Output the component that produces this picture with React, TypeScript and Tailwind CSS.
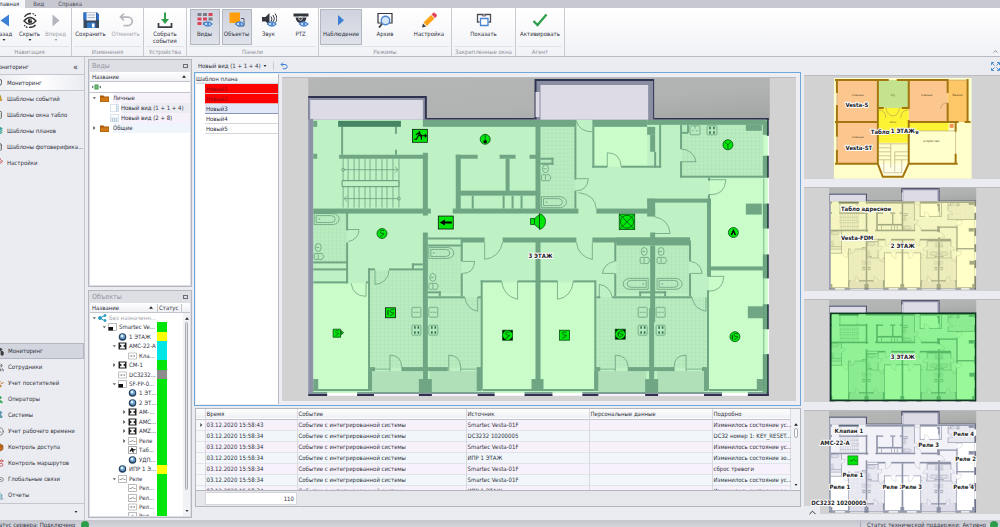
import type { ReactNode } from "react";
import clsx from "clsx";
import {
  Bell,
  Box,
  ChartColumn,
  ChevronUp,
  ClipboardList,
  Clock,
  FileText,
  Layers,
  Link2,
  MonitorSmartphone,
  Pin,
  Route,
  Shield,
  User,
  UserCheck,
  Users,
  Wrench,
} from "lucide-react";

/* ---------- Ribbon icons ---------- */

function Icon({ children }: { children: ReactNode }) {
  return (
    <svg viewBox="0 0 32 32" className="h-4 w-4 shrink-0" fill="none">
      {children}
    </svg>
  );
}

function SmallEye() {
  return (
    <g>
      <path d="M13 24q7-8 17 0q-8 8-17 0z" fill="#fff" stroke="#4a86d0" strokeWidth="2.4" />
      <circle cx="22" cy="24" r="2.6" fill="#4a86d0" />
    </g>
  );
}

const BackIcon = () => (
  <Icon>
    <path d="M26 5v24L9 17z" fill="#3c7fd4" />
  </Icon>
);

const ForwardIcon = () => (
  <Icon>
    <path d="M9 5v24l14-12z" fill="#b4b5bd" />
  </Icon>
);

const HideIcon = () => (
  <Icon>
    <path d="M4 18q12-14 24 0q-12 13-24 0z" stroke="#333" strokeWidth="2.600" />
    <circle cx="16" cy="18" r="4.500" fill="#333" />
    <circle cx="18" cy="16" r="1.500" fill="#fff" />
    <path d="M5 10q4-7 13-7M27 26q-4 5-13 5" stroke="#333" strokeWidth="2.600" />
    <path d="M21 3q5 2 7 6M11 31q-5-2-6-5" stroke="#333" strokeWidth="2.600" strokeDasharray="3 2" />
  </Icon>
);

const SaveIcon = () => (
  <Icon>
    <path d="M1 1h27l4 4v27H1z" fill="#3a4a5e" />
    <path d="M1 1h7v15H1zM27 1h1l4 4v11h-5z" fill="#2f73c9" />
    <path d="M7 1h19v16H7z" fill="#f2f4f8" />
    <path d="M9 6h15M9 11h15" stroke="#a9b7cb" strokeWidth="2" />
    <path d="M8 21h17v11H8z" fill="#3478c8" />
    <path d="M18 23h5v8h-5z" fill="#fff" />
  </Icon>
);

const UndoIcon = () => (
  <Icon>
    <path d="M5 10h15a8 8 0 0 1 0 17h-9M12 3l-7 7 7 7" stroke="#b6b7be" strokeWidth="3.500" />
  </Icon>
);

const CollectIcon = () => (
  <Icon>
    <path d="M3 22v8h26v-8" stroke="#3b3d45" strokeWidth="3.5" />
    <path d="M16 1v18" stroke="#2f9e4c" strokeWidth="4" />
    <path d="M8 14h16l-8 10z" fill="#2f9e4c" />
  </Icon>
);

const ViewsIcon = () => (
  <Icon>
    <path d="M1 2h8v6H1zM12 2h8v6h-8zM12 20h8v6h-8z" fill="#7a7c86" />
    <path d="M23 2h8v6h-8zM1 11h8v6H1z" fill="#d9445b" />
    <path d="M12 11h8v6h-8zM1 20h8v6H1z" fill="#d9445b" />
    <path d="M23 11h8v6h-8z" fill="#7a7c86" />
    <SmallEye />
  </Icon>
);

const ObjectsIcon = () => (
  <Icon>
    <path d="M1 1h21v21H1z" fill="#ff9d0a" />
    <path d="M24 13h6v15H18" stroke="#55606f" strokeWidth="2" />
    <SmallEye />
  </Icon>
);

const SoundIcon = () => (
  <Icon>
    <path d="M2 10h7l8-8v24l-8-7H2z" fill="#34363e" />
    <path d="M20 9q4 5 0 10M24 6q6 8 0 14M28 3q7 10 1 18" stroke="#34363e" strokeWidth="2" />
    <SmallEye />
  </Icon>
);

const PtzIcon = () => (
  <Icon>
    <path d="M1 3h30v6H1zM5 11h22q-2 11-11 11T5 11z" fill="#34363e" />
    <circle cx="15" cy="13" r="3.5" stroke="#fff" strokeWidth="1.5" />
    <SmallEye />
  </Icon>
);

const PlayIcon = () => (
  <Icon>
    <path d="M10 6v21l12-10.500z" fill="#3c7fd4" />
  </Icon>
);

const ArchiveIcon = () => (
  <Icon>
    <path d="M2 3h28v19H2z" stroke="#34363e" strokeWidth="2.4" />
    <circle cx="17" cy="17" r="8.500" fill="#d5e4f6" stroke="#4a86d0" strokeWidth="2.8" />
    <path d="M10 24l-6 7" stroke="#34363e" strokeWidth="3.5" />
  </Icon>
);

const PencilIcon = () => (
  <Icon>
    <path d="M2 31l2-8 6 6z" fill="#34363e" />
    <path d="M5 21L20 6l7 7-15 15z" fill="#ffa416" />
    <path d="M21 5l3-3q2-2 4 0l3 3q2 2 0 4l-3 3z" fill="#e0455a" />
  </Icon>
);

const WindowsIcon = () => (
  <Icon>
    <path d="M7 20H3V5h11v4M25 20h4V5H18v4" stroke="#4b4e57" strokeWidth="2.600" />
    <path d="M9 13h15v14H9z" fill="#fff" stroke="#4a86d0" strokeWidth="2.600" />
  </Icon>
);

const CheckIcon = () => (
  <Icon>
    <path d="M3 18l8 8L29 5" stroke="#2f9e4c" strokeWidth="4.500" />
  </Icon>
);

/* ---------- Ribbon ---------- */

type RibbonButtonProps = {
  icon: ReactNode;
  label: string;
  width?: string;
  active?: boolean;
  disabled?: boolean;
  caret?: boolean;
};

function RibbonButton({ icon, label, width = "w-[42px]", active, disabled, caret }: RibbonButtonProps) {
  return (
    <button
      className={clsx(
        "flex h-9 shrink-0 flex-col items-center border pt-0.5",
        width,
        active ? "border-[#b3b7c2] bg-linear-to-b from-[#cfd3de] to-[#dfe2e9]" : "border-transparent",
        disabled && "text-[#a3a4ac]"
      )}
    >
      {icon}
      <span className="mt-0.5 text-center leading-[7px]">{label}</span>
      {caret && <Caret className="mt-0.5" />}
    </button>
  );
}

function Caret({ className }: { className?: string }) {
  return (
    <svg viewBox="0 0 6 4" className={clsx("h-[2px] w-[4px] shrink-0", className)}>
      <path d="M0 0h6L3 4z" fill="currentColor" />
    </svg>
  );
}

function RibbonGroup({ title, className, children }: { title: string; className: string; children: ReactNode }) {
  return (
    <section className={clsx("flex shrink-0 flex-col border-r border-[#c9cad2] pt-px", className)}>
      <div className="flex flex-1 justify-center gap-0.5">{children}</div>
      <h2 className="mx-0.5 border-t border-[#e3e4ea] text-center leading-[9px] whitespace-nowrap text-[#8f919b]">
        {title}
      </h2>
    </section>
  );
}

function Ribbon() {
  return (
    <header className="shrink-0">
      <nav className="flex h-2 items-center bg-[#c8c8d1] leading-[8px]">
        <button className="-ml-2 h-2 bg-[#f6f7fa] pr-1.5 pl-1">Главная</button>
        <button className="ml-2 text-[#4b4d5c]">Вид</button>
        <button className="ml-3.5 text-[#4b4d5c]">Справка</button>
      </nav>
      <div className="flex h-[49px] overflow-hidden border-b border-[#b9bac3] bg-linear-to-b from-white to-[#f1f2f6]">
        <RibbonGroup title="Навигация" className="-ml-3 w-[84px]">
          <RibbonButton icon={<BackIcon />} label="Назад" width="w-[24px]" caret />
          <RibbonButton icon={<HideIcon />} label="Скрыть" width="w-[24px]" caret />
          <RibbonButton icon={<ForwardIcon />} label="Вперед" width="w-[24px]" caret disabled />
        </RibbonGroup>
        <RibbonGroup title="Изменения" className="w-[72px]">
          <RibbonButton icon={<SaveIcon />} label="Сохранить" width="w-[34px]" />
          <RibbonButton icon={<UndoIcon />} label="Отменить" width="w-[32px]" disabled />
        </RibbonGroup>
        <RibbonGroup title="Устройства" className="w-[43px]">
          <RibbonButton icon={<CollectIcon />} label="Собрать события" width="w-[32px]" />
        </RibbonGroup>
        <RibbonGroup title="Панели" className="w-[132px]">
          <RibbonButton icon={<ViewsIcon />} label="Виды" width="w-[30px]" active />
          <RibbonButton icon={<ObjectsIcon />} label="Объекты" width="w-[30px]" active />
          <RibbonButton icon={<SoundIcon />} label="Звук" width="w-[30px]" />
          <RibbonButton icon={<PtzIcon />} label="PTZ" width="w-[30px]" />
        </RibbonGroup>
        <RibbonGroup title="Режимы" className="w-[133px]">
          <RibbonButton icon={<PlayIcon />} label="Наблюдение" active />
          <RibbonButton icon={<ArchiveIcon />} label="Архив" />
          <RibbonButton icon={<PencilIcon />} label="Настройка" />
        </RibbonGroup>
        <RibbonGroup title="Закрепленные окна" className="w-[64px]">
          <RibbonButton icon={<WindowsIcon />} label="Показать" />
        </RibbonGroup>
        <RibbonGroup title="Агент" className="w-[49px]">
          <RibbonButton icon={<CheckIcon />} label="Активировать" />
        </RibbonGroup>
        <button className="mt-auto mr-px mb-px ml-auto text-[#4b4d5c]" aria-label="Свернуть ленту">
          <ChevronUp size={7} />
        </button>
      </div>
    </header>
  );
}

/* ---------- Left navigation ---------- */

const pages = [
  { label: "Мониторинг", icon: <Shield size={9} color="#333" />, active: true },
  { label: "Шаблоны событий", icon: <Bell size={9} color="#a37b1c" fill="#e0a92c" /> },
  { label: "Шаблоны окна табло", icon: <ClipboardList size={9} color="#4e5a45" /> },
  { label: "Шаблоны планов", icon: <Layers size={9} color="#2f9e6c" fill="#35a9c9" /> },
  { label: "Шаблоны фотоверифика...", icon: <FileText size={9} color="#555" /> },
  { label: "Настройки", icon: <Wrench size={9} color="#c23a3a" /> },
];

const modules = [
  { label: "Мониторинг", icon: <MonitorSmartphone size={9} color="#333" fill="#444" />, active: true },
  { label: "Сотрудники", icon: <Users size={9} color="#2d4f7c" fill="#e0a92c" /> },
  { label: "Учет посетителей", icon: <UserCheck size={9} color="#b26a24" fill="#d8903c" /> },
  { label: "Операторы", icon: <User size={9} color="#2f9e4c" fill="#48b35c" /> },
  { label: "Системы", icon: <Pin size={9} color="#2f73c9" fill="#6bb36f" /> },
  { label: "Учет рабочего времени", icon: <Clock size={9} color="#666" /> },
  { label: "Контроль доступа", icon: <Box size={9} color="#8a4510" fill="#c9701c" /> },
  { label: "Контроль маршрутов", icon: <Route size={9} color="#c23a3a" /> },
  { label: "Глобальные связи", icon: <Link2 size={9} color="#666" /> },
  { label: "Отчеты", icon: <ChartColumn size={9} color="#2f7fa0" /> },
];

function Sidebar() {
  return (
    <aside className="flex w-[84px] shrink-0 flex-col overflow-hidden">
      <div className="-ml-1.5 flex h-[18px] shrink-0 items-center justify-between border-b border-[#c5c6ce] pt-0.5 pr-1.5">
        <h2>Мониторинг</h2>
        <button className="text-[9px]" aria-label="Свернуть">
          «
        </button>
      </div>
      <ul className="-ml-1.5 flex-1">
        {pages.map((p) => (
          <li key={p.label}>
            <button
              className={clsx(
                "flex h-4 w-full items-center gap-1 border-b text-left whitespace-nowrap",
                p.active
                  ? "border-[#c5c6ce] bg-linear-to-r from-[#ebecf1] via-white to-[#ebecf1]"
                  : "border-transparent"
              )}
            >
              {p.icon}
              {p.label}
            </button>
          </li>
        ))}
      </ul>
      <ul className="-ml-1.5">
        {modules.map((m) => (
          <li key={m.label}>
            <button
              className={clsx(
                "flex h-4 w-full items-center gap-1 border pr-px text-left whitespace-nowrap",
                m.active ? "border-[#b3b6c0] bg-[#d3d6df]" : "border-transparent"
              )}
            >
              {m.icon}
              {m.label}
            </button>
          </li>
        ))}
      </ul>
      <div className="flex h-[17px] shrink-0 items-center justify-end border-t border-[#c5c6ce] pr-1.5">
        <Caret />
      </div>
    </aside>
  );
}

/* ---------- Docked panels ---------- */

function Panel({ title, children }: { title: string; children: ReactNode }) {
  return (
    <section className="flex min-h-0 flex-1 basis-0 flex-col border border-[#b5b7c0] bg-[#dedfe5] px-px pb-px">
      <div className="flex h-3 shrink-0 items-center justify-between px-0.5">
        <h2 className="text-[7px] text-[#9294a0]">{title}</h2>
        <span className="h-[4px] w-[5px] border border-[#6b6d78]" />
      </div>
      {children}
    </section>
  );
}

function SortMark() {
  return (
    <svg viewBox="0 0 6 4" className="h-[3px] w-[4px] shrink-0">
      <path d="M0 4h6L3 0z" fill="#222" />
    </svg>
  );
}

function Arrow({ open }: { open?: boolean }) {
  return (
    <svg viewBox="0 0 6 6" className="h-[4px] w-[4px] shrink-0">
      {open === true && <path d="M1 2h5L3.500 5z" fill="#666" />}
      {open === false && <path d="M2 0v6l3-3z" fill="#444" />}
    </svg>
  );
}

function Folder() {
  return (
    <svg viewBox="0 0 18 14" className="h-[7px] w-[9px] shrink-0">
      <path d="M0 1h7l2 2h9v11H0z" fill="#a8560b" />
      <path d="M1 5h16v8H1z" fill="#d07a17" />
    </svg>
  );
}

function ViewIcon({ bottom }: { bottom?: boolean }) {
  return (
    <svg viewBox="0 0 18 16" className="h-[8px] w-[9px] shrink-0">
      <path d="M.5.5h17v15H.5z" fill="#fff" stroke="#9fb9cf" />
      {bottom ? (
        <path d="M1 8h16M1 12h16M5 8v8M9 8v8M13 8v8" stroke="#8fb0cb" />
      ) : (
        <path d="M13 1v14M13 5h4M13 9h4M13 12h4" stroke="#8fb0cb" />
      )}
    </svg>
  );
}

function ViewsPanel() {
  return (
    <Panel title="Виды">
      <div className="flex min-h-0 flex-1 flex-col bg-white">
        <div className="flex h-2.5 shrink-0 items-center justify-between border-b border-[#c3c5cd] bg-linear-to-b from-white to-[#eff0f4] px-0.5 pr-1">
          Название
          <SortMark />
        </div>
        <div className="flex h-[11px] shrink-0 items-center border-b border-[#c3c5cd] pl-0.5">
          <svg viewBox="0 0 18 12" className="h-[6px] w-[9px]">
            <path d="M5 1h8v10H5z" fill="#3d9a48" />
            <path d="M0 3v6l4-3zM14 6l4-3v6z" fill="#6b7c70" />
            <path d="M7 4h4M7 6h4M7 8h4" stroke="#cfe8d2" />
          </svg>
        </div>
        <ul>
          <li className="flex h-2.5 items-center gap-1 pl-0.5">
            <Arrow open />
            <Folder />
            <span className="flex-1 bg-[#f6f1fa] leading-[10px]">Личные</span>
          </li>
          <li className="flex h-2.5 items-center gap-0.5 pl-5">
            <ViewIcon />
            <span className="flex-1 bg-[#ecedf2] leading-[10px] whitespace-nowrap">Новый вид (1 + 1 + 4)</span>
          </li>
          <li className="flex h-2.5 items-center gap-0.5 pl-5">
            <ViewIcon bottom />
            <span className="flex-1 bg-[#f6f1fa] leading-[10px] whitespace-nowrap">Новый вид (2 + 8)</span>
          </li>
          <li className="flex h-2.5 items-center gap-1 pl-0.5">
            <Arrow open={false} />
            <Folder />
            <span className="flex-1 bg-[#eff5fa] leading-[10px]">Общие</span>
          </li>
        </ul>
      </div>
    </Panel>
  );
}

type NodeKind = "share" | "panel" | "globe" | "sum" | "relay" | "run" | "chip";

function NodeIcon({ kind }: { kind: NodeKind }) {
  return (
    <svg viewBox="0 0 18 16" className="h-[8px] w-[9px] shrink-0" fill="none">
      {kind === "share" && (
        <g stroke="#2a9cc4" fill="#2a9cc4" strokeWidth="2">
          <path d="M4 8l10-5M4 8l10 6" />
          <circle cx="4" cy="8" r="3" />
          <circle cx="14" cy="3" r="2" />
          <circle cx="14" cy="13" r="2" />
        </g>
      )}
      {kind === "panel" && (
        <g>
          <path d="M1 1h16v14H1z" fill="#fff" stroke="#777" />
          <path d="M1 8h9v7H1z" fill="#111" />
        </g>
      )}
      {kind === "globe" && (
        <g>
          <circle cx="9" cy="8" r="7.500" fill="#27435f" />
          <circle cx="9" cy="7" r="5" fill="#6ea6d6" />
          <circle cx="8" cy="6" r="2.500" fill="#e7f3fc" />
        </g>
      )}
      {kind === "sum" && (
        <g>
          <path d="M1 1h16v14H1z" fill="#222" />
          <path d="M4 3h10v2l-4 3 4 3v2H4v-2l4-3-4-3z" fill="#fff" />
        </g>
      )}
      {kind === "relay" && (
        <g stroke="#777">
          <path d="M1 1h16v14H1z" fill="#fff" />
          <path d="M3 9h3l5-3M11 9h4" stroke="#333" />
        </g>
      )}
      {kind === "run" && (
        <g>
          <path d="M1 1h16v14H1z" fill="#fff" stroke="#555" />
          <path d="M4 11l4-6 3 3 4-1M7 7l4 6" stroke="#111" strokeWidth="2.500" />
        </g>
      )}
      {kind === "chip" && (
        <g stroke="#888">
          <path d="M1 2h16v12H1z" fill="#fff" />
          <path d="M3 8h3M7 6v4M9 8h3M13 6v4" stroke="#555" />
        </g>
      )}
    </svg>
  );
}

type ObjectNode = { level: 0 | 1 | 2 | 3; kind: NodeKind; label: string; open?: boolean; status?: string };

const objects: ObjectNode[] = [
  { level: 0, kind: "share", label: "Без назначенн...", open: true },
  { level: 1, kind: "panel", label: "Smartec Ve...", open: true, status: "bg-[#00e60a]" },
  { level: 2, kind: "globe", label: "1 ЭТАЖ", status: "bg-[#ffff00]" },
  { level: 2, kind: "sum", label: "АМС-22-А", open: true, status: "bg-[#00e5e5]" },
  { level: 3, kind: "chip", label: "Кла...", status: "bg-[#00e5e5]" },
  { level: 2, kind: "sum", label: "СМ-1", open: false, status: "bg-[#00e60a]" },
  { level: 2, kind: "chip", label: "DC3232...", status: "bg-[#8c8c8c]" },
  { level: 2, kind: "panel", label: "SF-FP-0...", open: true, status: "bg-[#00e60a]" },
  { level: 3, kind: "globe", label: "1 ЭТ...", status: "bg-[#00e60a]" },
  { level: 3, kind: "globe", label: "2 ЭТ...", status: "bg-[#00e60a]" },
  { level: 3, kind: "sum", label: "АМ-...", open: false, status: "bg-[#00e60a]" },
  { level: 3, kind: "sum", label: "АМС...", open: false, status: "bg-[#00e60a]" },
  { level: 3, kind: "sum", label: "AMZ...", open: false, status: "bg-[#00e60a]" },
  { level: 3, kind: "relay", label: "Реле", open: false, status: "bg-[#00e60a]" },
  { level: 3, kind: "run", label: "Таб...", status: "bg-[#00e60a]" },
  { level: 3, kind: "globe", label: "УДП...", status: "bg-[#00e60a]" },
  { level: 2, kind: "globe", label: "ИПР 1 Э...", status: "bg-[#ffff00]" },
  { level: 2, kind: "relay", label: "Реле", open: true, status: "bg-[#00e60a]" },
  { level: 3, kind: "relay", label: "Рел...", status: "bg-[#00e60a]" },
  { level: 3, kind: "relay", label: "Рел...", status: "bg-[#00e60a]" },
  { level: 3, kind: "chip", label: "Рел...", status: "bg-[#00e60a]" },
];

const indent = ["pl-0.5", "pl-3", "pl-[22px]", "pl-8"];

function ObjectsPanel() {
  return (
    <Panel title="Объекты">
      <div className="flex h-2.5 shrink-0 items-center border-b border-[#c3c5cd] bg-linear-to-b from-white to-[#eff0f4]">
        <span className="flex w-[67px] items-center justify-between pr-1 pl-0.5">
          Название
          <SortMark />
        </span>
        <span className="w-[25px] border-x border-[#c3c5cd] pl-px">Статус</span>
      </div>
      <div className="flex min-h-0 flex-1 bg-white">
        <ul className="flex flex-1 flex-col overflow-hidden">
          {objects.map((o, i) => (
            <li key={i} className="flex min-h-0 flex-1 basis-0">
              <span
                className={clsx(
                  "flex w-[67px] shrink-0 items-center gap-0.5 whitespace-nowrap",
                  indent[o.level],
                  o.level === 0 && "text-[#a3a4ac]"
                )}
              >
                <Arrow open={o.open} />
                <NodeIcon kind={o.kind} />
                <span>{o.label}</span>
              </span>
              <span className={clsx("w-2.5", o.status)} />
            </li>
          ))}
          <li className="flex h-1 shrink-0 overflow-hidden">
            <span className="flex w-[67px] gap-0.5 pl-[38px]">
              <NodeIcon kind="relay" />
              <span>Рел...</span>
            </span>
            <span className="w-2.5 bg-[#00e60a]" />
          </li>
        </ul>
        <div className="flex w-[7px] flex-col items-center justify-between bg-[#f1f2f5] py-1">
          <SortMark />
          <span className="mt-0.5 mb-5 w-[3px] flex-1 rounded-full border border-[#a9abb5] bg-[#dfe0e6]" />
          <Caret />
        </div>
      </div>
    </Panel>
  );
}

/* ---------- Floor plan ---------- */

// [x, y, width, height] in plan units
type Rect = [number, number, number, number];

const rooms: Rect[] = [
  [313, 283, 55, 107],
  [483, 282, 53, 108],
  [541, 282, 54, 108],
  [595, 126, 53, 40],
  [711, 178, 54, 89],
  [710, 270, 55, 120],
  [765, 135, 5, 20],
  [765, 177, 5, 26],
  [765, 228, 5, 26],
  [765, 278, 5, 26],
  [765, 329, 5, 25],
];

const tiles: Rect[] = [
  [313, 212, 34, 50],
  [370, 270, 53, 98],
  [541, 126, 35, 82],
  [683, 124, 81, 52],
  [428, 245, 34, 48],
  [617, 245, 34, 48],
  [656, 245, 34, 48],
  [430, 297, 51, 71],
  [597, 297, 54, 71],
  [656, 297, 52, 71],
];

const balconies: Rect[] = [
  [372, 371, 50, 21],
  [430, 371, 48, 21],
  [599, 371, 48, 21],
  [658, 371, 47, 21],
];

const walls: Rect[] = [
  [308, 118, 5, 276],
  [308, 392, 462, 2],
  [313, 120, 4, 6],
  [313, 153, 4, 5],
  [341, 126, 2, 28],
  [395, 126, 2, 7],
  [395, 149, 2, 5],
  [339, 154, 89, 4],
  [423, 152, 5, 63],
  [423, 119, 154, 7],
  [593, 119, 55, 7],
  [648, 119, 119, 5],
  [313, 208, 118, 5],
  [423, 232, 5, 162],
  [346, 212, 2, 18],
  [346, 242, 2, 41],
  [313, 261, 34, 2],
  [313, 268, 34, 2],
  [313, 281, 35, 2],
  [368, 268, 7, 2],
  [389, 268, 35, 2],
  [412, 263, 11, 2],
  [412, 263, 2, 6],
  [368, 268, 2, 122],
  [366, 281, 3, 2],
  [370, 367, 5, 4],
  [402, 367, 46, 4],
  [368, 371, 4, 20],
  [419, 379, 13, 16],
  [313, 379, 5, 12],
  [313, 389, 55, 2],
  [456, 154, 22, 4],
  [456, 154, 5, 56],
  [500, 154, 16, 4],
  [506, 158, 4, 33],
  [530, 154, 7, 4],
  [536, 120, 5, 90],
  [460, 190, 77, 5],
  [472, 195, 2, 13],
  [503, 195, 2, 13],
  [512, 195, 2, 13],
  [521, 195, 2, 13],
  [453, 208, 126, 5],
  [597, 208, 59, 5],
  [575, 126, 2, 53],
  [575, 190, 2, 18],
  [541, 157, 13, 2],
  [541, 162, 13, 2],
  [552, 157, 2, 7],
  [593, 126, 2, 41],
  [593, 165, 15, 2],
  [622, 165, 40, 2],
  [648, 126, 8, 8],
  [651, 134, 5, 17],
  [655, 151, 2, 16],
  [660, 124, 2, 43],
  [681, 124, 2, 24],
  [681, 161, 2, 16],
  [681, 175, 86, 2],
  [688, 124, 2, 8],
  [683, 131, 6, 2],
  [747, 124, 16, 6],
  [764, 120, 4, 14],
  [764, 155, 4, 22],
  [648, 198, 62, 4],
  [648, 198, 8, 18],
  [651, 232, 5, 6],
  [708, 198, 4, 78],
  [709, 177, 2, 3],
  [709, 194, 2, 5],
  [747, 203, 16, 11],
  [428, 237, 34, 2],
  [428, 244, 34, 2],
  [461, 237, 24, 5],
  [503, 237, 74, 5],
  [593, 237, 98, 5],
  [617, 237, 74, 8],
  [461, 240, 2, 21],
  [461, 273, 2, 23],
  [536, 241, 5, 150],
  [428, 291, 13, 2],
  [439, 291, 2, 5],
  [428, 296, 37, 2],
  [478, 296, 4, 2],
  [481, 280, 21, 2],
  [518, 280, 40, 2],
  [574, 280, 22, 2],
  [481, 280, 2, 110],
  [595, 280, 2, 110],
  [615, 240, 2, 21],
  [615, 273, 2, 23],
  [690, 240, 2, 21],
  [690, 273, 2, 23],
  [597, 296, 4, 2],
  [613, 296, 80, 2],
  [640, 291, 27, 2],
  [640, 291, 2, 5],
  [665, 291, 2, 5],
  [651, 245, 5, 77],
  [650, 308, 5, 80],
  [708, 266, 57, 4],
  [708, 290, 2, 100],
  [749, 306, 16, 12],
  [477, 367, 5, 24],
  [596, 367, 5, 4],
  [595, 371, 4, 20],
  [629, 367, 46, 4],
  [703, 367, 6, 4],
  [705, 371, 4, 20],
  [532, 379, 12, 12],
  [646, 379, 13, 14],
  [758, 379, 7, 12],
  [483, 389, 53, 2],
  [541, 389, 54, 2],
  [710, 389, 55, 2],
  [764, 203, 4, 25],
  [764, 254, 4, 24],
  [764, 304, 4, 25],
  [764, 354, 4, 40],
];

const facade: Rect[] = [
  [308, 394, 19, 2],
  [357, 394, 17, 2],
  [419, 394, 13, 2],
  [478, 394, 17, 2],
  [525, 394, 28, 2],
  [583, 394, 16, 2],
  [646, 394, 13, 2],
  [705, 394, 18, 2],
  [749, 394, 21, 2],
  [768, 118, 2, 17],
  [768, 155, 2, 22],
  [768, 203, 2, 25],
  [768, 254, 2, 24],
  [768, 304, 2, 25],
  [768, 354, 2, 42],
];

const doors = [
  "M348 229h11a12 12 0 0 1-11 12",
  "M351 283q2 13 15 13v-13",
  "M375 270v14a14 14 0 0 0 14-14",
  "M390 371v-16q11 0 12 12v4",
  "M485 242v17q15-2 18-17",
  "M577 242q2 14 16 17v-17",
  "M463 261h12q-1 12-12 12",
  "M465 297q2 12 13 14v-14",
  "M502 281q2 15 16 18v-18",
  "M558 281v18q14-2 16-18",
  "M577 120q3 11 16 11",
  "M577 178h12q-1 12-12 12",
  "M579 192q17 2 18 16",
  "M608 166v-14q13 0 14 14",
  "M681 148q14 1 16 13h-16",
  "M710 179h17q-1 16-17 15",
  "M655 216q15 3 16 17h-16",
  "M709 276h16q-1 15-16 15",
  "M615 261q-10 2-12 12h12",
  "M600 297v-13q11 2 13 13",
  "M692 261q10 2 11 12h-11",
  "M693 297q2 12 14 14v-14",
  "M449 371v-16q11 0 12 12v4",
  "M616 371v-16q12 0 13 12v4",
  "M687 371v-16q-12 0-12 12v4",
];

function Rects({ items, fill }: { items: Rect[]; fill: string }) {
  return (
    <g fill={fill}>
      {items.map(([x, y, w, h], i) => (
        <rect key={i} x={x} y={y} width={w} height={h} />
      ))}
    </g>
  );
}

function Tub({ x, y, flip }: { x: number; y: number; flip?: boolean }) {
  return (
    <g transform={flip ? `translate(${x + 25} ${y}) scale(-1 1)` : `translate(${x} ${y})`}>
      <path d="M0 0h19q6 1 6 5.500t-6 5.500H0z" />
      <path d="M2 2h15q4 0 4 3.500T17 9H2z" />
      <circle cx="5" cy="5.500" r=".4" />
    </g>
  );
}

function Kitchen({ x, y }: { x: number; y: number }) {
  return (
    <g transform={`translate(${x} ${y})`}>
      <rect width="9" height="10" rx="1" />
      <path d="M1.500 5h2M5.500 5h2M4.500 4.500v1" />
      <rect y="18" width="9" height="10" rx="1" />
      <path d="M3 19v8M6.500 19v8" stroke="#3f4f63" strokeWidth="1.600" strokeDasharray="2.500 2.500" />
    </g>
  );
}

function Toilet({ x, y }: { x: number; y: number }) {
  return (
    <g transform={`translate(${x} ${y})`}>
      <ellipse cx="4" cy="4" rx="3" ry="4" />
      <path d="M2 4h3" />
      <rect x="0" y="10" width="4" height="6" rx="1" />
      <path d="M4 10h4q3 3 0 6H4" />
    </g>
  );
}

type FloorPlanProps = { tint?: string; tintOpacity?: number; outlined?: boolean; children?: ReactNode };

function FloorPlan({ tint, tintOpacity, outlined, children }: FloorPlanProps) {
  return (
    <>
      <defs>
        <pattern id="tile" width="4" height="4" patternUnits="userSpaceOnUse">
          <rect width="4" height="4" fill="#ebebf3" />
          <path d="M0 .5h4M.5 0v4" stroke="#dfdfe9" strokeWidth=".6" />
        </pattern>
        <linearGradient id="sky" x1="0" x2="1" y2="1">
          <stop offset="0" stopColor="#b5b7b6" />
          <stop offset=".6" stopColor="#b1b3b2" />
          <stop offset="1" stopColor="#a3a5a4" />
        </linearGradient>
      </defs>
      <rect x="308" y="77" width="463" height="320" fill="#d2d2d2" />
      <rect x="308" y="77" width="463" height="42" fill="url(#sky)" />

      {/* Roof terraces */}
      <path d="M308 95h119v24H308z" fill="#2f3350" />
      <path d="M308 97h117v22H308z" fill="#8e93a8" />
      <path d="M310 99h113v20H310z" fill="#dcdbe6" />
      <path d="M535 78h120v41H535z" fill="#2f3350" />
      <path d="M537 80h117v39H537z" fill="#8a8ea3" />
      <path d="M541 84h108v35H541zM536 91h4v25h-4z" fill="#dcdbe6" />
      <path d="M427 118h108M655 118h115" stroke="#2f3350" strokeWidth="2" />

      <rect x="308" y="119" width="462" height="277" fill="#f2f2f8" />
      <Rects items={rooms} fill="#ffffff" />
      <Rects items={tiles} fill="url(#tile)" />
      <Rects items={balconies} fill="#dfdce9" />
      <Rects items={walls} fill="#8e93a8" />
      <rect x="338" y="120" width="63" height="6" fill="#5b6a80" />
      <path d="M327 392h30v3h-30zM495 392h30v3h-30zM553 392h30v3h-30zM723 392h26v3h-26z" fill="#fff" />
      <Rects items={facade} fill="#2f3350" />

      <g fill="none" stroke="#777f94" strokeWidth=".7">
        {doors.map((d) => (
          <path key={d} d={d} />
        ))}
        <path d="M343 158v49M348 158v49M354 158v49M359 158v49M365 158v49M370 158v49M376 158v49M382 158v49M387 158v49M393 158v49M399 158v49" />
        <path d="M342 180h57v6h-57z" fill="#f2f2f8" strokeWidth="1" />
        <path d="M344 169h54l-3-3m3 3l-3 3M398 198h-54l3-3m-3 3l3 3" />
        <circle cx="343" cy="169" r="1.500" />
        <circle cx="399" cy="198" r="1.500" />
        <path d="M375 369h15M461 369h16M601 369h15M687 369h16M765 178v88M765 271v118" />
        <Tub x={314} y={213} />
        <Tub x={429} y={247} />
        <Tub x={542} y={196} />
        <Tub x={624} y={278} flip />
        <Tub x={658} y={278} />
        <Toilet x={314} y={243} />
        <Toilet x={429} y={273} />
        <Toilet x={542} y={164} />
        <Toilet x={641} y={247} />
        <Toilet x={658} y={247} />
        <Kitchen x={412} y={307} />
        <Kitchen x={429} y={307} />
        <Kitchen x={639} y={307} />
        <Kitchen x={657} y={307} />
        <rect x="691" y="125" width="10" height="9" rx="1" />
        <path d="M696 125v3M693 130h2M697 130h2" />
        <rect x="708" y="125" width="10" height="9" rx="1" />
        <path d="M711 126v7M715 126v7" stroke="#3f4f63" strokeWidth="1.600" strokeDasharray="2.500 2" />
      </g>

      {tint && (
        <rect
          x="313"
          y="119"
          width="456"
          height="274"
          fill={tint}
          fillOpacity={tintOpacity}
          stroke={outlined ? "#103a20" : "none"}
          strokeWidth={outlined ? 5 : 0}
        />
      )}
      {children}
    </>
  );
}

function Label({ x, y, anchor = "middle", children }: { x: number; y: number; anchor?: "start" | "middle"; children: string }) {
  return (
    <text
      x={x}
      y={y}
      textAnchor={anchor}
      dominantBaseline="central"
      className="fill-[#1b1b25] stroke-white text-[6px] font-bold"
      strokeWidth="2"
      strokeLinejoin="round"
      paintOrder="stroke"
    >
      {children}
    </text>
  );
}

const squiggle = "M2-3q-4-1-4 1t3 2-3 3";

function Devices() {
  return (
    <g stroke="#064d10" strokeWidth=".8" fill="#00e60a">
      {/* Exit signs */}
      <rect x="412.500" y="128.500" width="15" height="13" stroke="#0b1a0c" />
      <circle cx="419.500" cy="131.500" r="1" fill="#000" stroke="none" />
      <path d="M414.500 138.500h2l2.500-4.500 2.500 2v3M416 134l2-1.500 2 .5 2 2h2M422.500 135h4M425 133.500l1.500 1.500-1.500 1.500" fill="none" stroke="#000" strokeWidth="1.100" />
      <rect x="438.500" y="215.500" width="15" height="13" stroke="#0b1a0c" />
      <path d="M440 222l5-3v2h7v2h-7v2z" fill="#000" stroke="none" />

      <circle cx="485.500" cy="138.500" r="5" />
      <circle cx="485.500" cy="141" r="1.800" fill="#000" stroke="none" />
      <path d="M485.500 134v6" />
      <path d="M531 218h4l5-4v14l-5-4h-4zM540 213q6 2 6 8t-6 8zM535 218v6" />
      <rect x="620" y="213.500" width="15.500" height="15.500" />
      <circle cx="627.800" cy="221.200" r="6.500" />
      <path d="M620 213.500l15.500 15.500M635.500 213.500L620 229" />
      <circle cx="729" cy="144" r="5" />
      <path d="M726 141l3 3 3-3M729 144v4" fill="none" />
      <circle cx="734.500" cy="232" r="5" />
      <path d="M732.500 234.500l2-4.500 2 4.500" fill="none" stroke="#000" strokeWidth="1.500" />

      {/* Smoke detectors */}
      <circle cx="382" cy="233" r="5" />
      <path d={squiggle} transform="translate(382 233)" fill="none" />
      <rect x="385.500" y="307.500" width="10" height="10" stroke="#0b1a0c" />
      <path d={squiggle} transform="translate(392 312.500)" fill="none" />
      <path d="M388 310v5" strokeWidth="1.200" />
      <path d="M333 329h7.500v8H333zM341 330.500l2.500 2-2.500 2z" />
      <path d={squiggle} transform="translate(337 333) scale(.8)" fill="none" />
      <rect x="503" y="330" width="10" height="10" fill="#000" />
      <circle cx="508" cy="335" r="4.800" stroke="none" />
      <path d={squiggle} transform="translate(508 335)" fill="none" />
      <rect x="560" y="330" width="10" height="10" />
      <path d={squiggle} transform="translate(565 335)" fill="none" />
      <rect x="616" y="329" width="10" height="10" fill="#000" />
      <circle cx="621" cy="334" r="4.800" stroke="none" />
      <path d={squiggle} transform="translate(622 334)" fill="none" />
      <path d="M619 332v4" strokeWidth="1.200" />
      <circle cx="736" cy="336.500" r="5" />
      <path d={squiggle} transform="translate(737 336.500)" fill="none" />
      <path d="M733.500 335v4" strokeWidth="1.200" />
    </g>
  );
}

/* ---------- Main view ---------- */

const templates = [
  { label: "Новый1", row: "bg-[#ff0000] text-[#8b1010] border-[#e9b0b0]" },
  { label: "Новый2", row: "bg-[#ff0000] text-[#8b1010] border-[#e9b0b0]" },
  { label: "Новый3", row: "bg-[#e2e8f8] border-[#8a95b5]" },
  { label: "Новый4", row: "border-[#d5d6dd]" },
  { label: "Новый5", row: "border-[#d5d6dd]" },
];

function PlanView() {
  return (
    <section className="flex min-h-0 flex-1 border border-[#6ea8d8] bg-[#eceef3] p-px">
      <div className="w-[83px] shrink-0 border-r border-[#b9bbc4] bg-white">
        <div className="h-2.5 border-b border-[#d5d6dd] bg-linear-to-b from-white to-[#eff0f4] leading-[9px]">
          Шаблон плана
        </div>
        <ul className="pl-[9px]">
          {templates.map((t) => (
            <li key={t.label} className={clsx("h-2.5 border-b pl-px leading-[10px]", t.row)}>
              {t.label}
            </li>
          ))}
        </ul>
      </div>
      <div className="min-w-0 flex-1 p-[3px]">
        <div className="h-full border-t border-[#b9bbc0] bg-[#d2d2d2] pb-1">
          <svg viewBox="308 77 463 320" preserveAspectRatio="xMidYMin meet" className="h-full w-full">
            <FloorPlan tint="#00f000" tintOpacity={0.21}>
              <Devices />
              <Label x={541} y={255}>
                3 ЭТАЖ
              </Label>
            </FloorPlan>
          </svg>
        </div>
      </div>
    </section>
  );
}

const events = [
  ["03.12.2020 15:58:43", "Smartec Vesta-01F", "Изменилось состояние ус..."],
  ["03.12.2020 15:58:34", "DC3232 10200005", "DC32 номер 1: KEY_RESET..."],
  ["03.12.2020 15:58:34", "Smartec Vesta-01F", "Изменилось состояние ус..."],
  ["03.12.2020 15:58:34", "ИПР 1 ЭТАЖ", "Изменилось состояние зо..."],
  ["03.12.2020 15:58:34", "Smartec Vesta-01F", "сброс тревоги"],
  ["03.12.2020 15:58:34", "Smartec Vesta-01F", "Изменилось состояние ус..."],
  ["03.12.2020 15:58:34", "ИПР 1 ЭТАЖ", "Изменилось состояние зо..."],
];

function EventLog() {
  const cell = "border-r border-[#d9dae1] py-0 pr-0 pl-px";
  return (
    <section className="mt-0.5 ml-px flex h-[99px] shrink-0 flex-col border border-[#b5b7c0] bg-[#e6e7eb]">
      <div className="flex h-[82px] overflow-hidden border-b border-[#b5b7c0] bg-white">
        <table className="h-[87px] w-full min-w-0 flex-1 table-fixed border-collapse text-left whitespace-nowrap">
          <colgroup>
            <col className="w-[9px]" />
            <col className="w-[92px]" />
            <col className="w-[169px]" />
            <col className="w-[123px]" />
            <col className="w-[123px]" />
            <col />
          </colgroup>
          <thead>
            <tr className="h-2.5 border-b border-[#c3c5cd] bg-linear-to-b from-white to-[#eff0f4]">
              <th className={cell} />
              <th className={clsx(cell, "font-normal")}>Время</th>
              <th className={clsx(cell, "font-normal")}>Событие</th>
              <th className={clsx(cell, "font-normal")}>Источник</th>
              <th className={clsx(cell, "font-normal")}>Персональные данные</th>
              <th className={clsx(cell, "font-normal")}>Подробно</th>
            </tr>
          </thead>
          <tbody>
            {events.map(([time, source, details], i) => (
              <tr key={i} className="h-[11px] border-b border-[#e3e3ec] odd:bg-[#f7f1fb] even:bg-[#f0f6fa]">
                <td className="border-r border-[#d9dae1] bg-[#f6f7f9] p-0 pl-[3px]">{i === 0 && <Arrow open={false} />}</td>
                <td className={cell}>{time}</td>
                <td className={cell}>Событие с интегрированной системы</td>
                <td className={cell}>{source}</td>
                <td className={cell} />
                <td className={cell}>{details}</td>
              </tr>
            ))}
          </tbody>
        </table>
        <div className="flex w-[9px] shrink-0 flex-col items-center bg-[#f1f2f5] pt-3.5 pb-1">
          <SortMark />
          <span className="mt-0.5 h-2.5 w-1 shrink-0 rounded-xs border border-[#a9abb5] bg-white" />
          <Caret className="mt-auto" />
        </div>
      </div>
      <div className="flex-1 py-px pl-[9px]">
        <div className="h-[13px] w-[92px] border border-[#d5d6dd] bg-white pr-0.5 text-right leading-[12px]">110</div>
      </div>
    </section>
  );
}

function Workspace() {
  return (
    <main className="flex min-w-0 flex-1 flex-col pb-[13px] pl-0.5">
      <div className="flex h-[15px] shrink-0 items-center pt-0.5 pl-1">
        <button className="flex items-center gap-0.5">
          Новый вид (1 + 1 + 4)
          <Caret />
        </button>
        <span className="mx-1.5 h-2 border-l border-[#c9cad2]" />
        <button aria-label="Вернуть">
          <svg viewBox="0 0 32 32" className="h-2 w-2" fill="none">
            <path d="M5 10h15a8 8 0 0 1 0 17h-9M12 2l-8 8 8 8" stroke="#3c7fd4" strokeWidth="4" />
          </svg>
        </button>
      </div>
      <PlanView />
      <EventLog />
    </main>
  );
}

/* ---------- Thumbnails ---------- */

function Thumb({ children }: { children: ReactNode }) {
  return (
    <div className="min-h-0 flex-1 basis-0 border-t border-[#b9bbc0] bg-[#d2d2d2]">
      <svg viewBox="0 0 196 103" preserveAspectRatio="xMinYMin meet" className="h-full w-full">
        {children}
      </svg>
    </div>
  );
}

function MiniPlan(props: FloorPlanProps) {
  return (
    <svg x="25" y="0" width="148" height="102" viewBox="308 77 463 320">
      <FloorPlan {...props} />
    </svg>
  );
}

function HousePlan() {
  return (
    <g>
      <path d="M30 2h138v101H30z" fill="#ffffcc" />
      <path d="M33 4h40v42H33zM33 46h40v42H33zM105 4h39v42h-39z" fill="#fbc78f" />
      <path d="M74 4h31v28H74z" fill="#c5e38e" />
      <path d="M144 4h20v42h-20z" fill="#fdc767" />
      <path d="M74 32h31v35H74zM105 46h40v9h-40z" fill="#fdf335" />
      <path d="M146 48h4v4h-4z" fill="#f2924b" />
      <path d="M74 88l5 13h20l6-13" stroke="#a3760f" fill="#ffffe6" strokeWidth="2" />
      <g stroke="#a3760f" strokeWidth="2" fill="none">
        <path d="M31 4h54M93 4h51M31 46h43M105 46h50M161 46h6M33 3v14M33 29v32M33 74v15M31 88h43M74 3v86M105 3v30M105 44v45M74 32h6M98 32h7M144 3v14M144 27v20M164 3v14M164 17v30M105 88h49M152 46v10M152 78v11" />
      </g>
      <g stroke="#a08a60" strokeWidth=".5" fill="none">
        <path d="M144 4h20M33 17v12M33 61v13M152 56v22M105 55h47" />
        <path d="M75 68h29M75 72h12M75 76h12M75 80h12M75 84h12M91 76h13M91 80h13M91 84h13M87 68v24M91 76v20M80 84v13h18V84" />
        <path d="M74 34q8 0 8 8M82 32q2 8 7 8t7-8M105 34q-8 0-8 8M144 27q-7 0-7 6" />
      </g>
      <g fill="#4a3c18" textAnchor="middle" className="text-[3px]">
        <text x="54" y="20">спальня</text>
        <text x="89" y="20">с/у</text>
        <text x="123" y="20">спальня</text>
        <text x="154" y="20">балкон</text>
        <text x="89" y="47">холл</text>
        <text x="54" y="62">спальня</text>
        <text x="128" y="66">второй свет</text>
      </g>
      <Label x={53} y={29}>Vesta-S</Label>
      <Label x={55} y={72}>Vesta-ST</Label>
      <Label x={67} y={56} anchor="start">Табло</Label>
      <Label x={113} y={56}>е</Label>
      <Label x={99} y={55}>1 ЭТАЖ</Label>
    </g>
  );
}

function Thumbnails() {
  return (
    <aside className="flex w-[199px] shrink-0 flex-col pl-[3px]">
      <div className="flex h-[18px] shrink-0 items-center justify-end">
        <button aria-label="На весь экран">
          <svg viewBox="0 0 18 18" className="h-[9px] w-[9px]" fill="none" stroke="#4a8fd0" strokeWidth="2">
            <path d="M1 6V1h5M12 1h5v5M17 12v5h-5M6 17H1v-5M2 2l5 5M16 2l-5 5M2 16l5-5M16 16l-5-5" />
          </svg>
        </button>
      </div>
      <div className="flex min-h-0 flex-1 flex-col gap-2">
        <Thumb>
          <HousePlan />
        </Thumb>
        <Thumb>
          <MiniPlan tint="#ffff00" tintOpacity={0.22} />
          <Label x={37} y={21} anchor="start">Табло адресное</Label>
          <Label x={37} y={50} anchor="start">Vesta-FDM</Label>
          <Label x={99} y={58}>2 ЭТАЖ</Label>
        </Thumb>
        <Thumb>
          <MiniPlan tint="#00f000" tintOpacity={0.4} outlined />
          <Label x={99} y={57}>3 ЭТАЖ</Label>
        </Thumb>
        <Thumb>
          <MiniPlan />
          <rect x="44" y="45" width="10" height="9" fill="#00e60a" stroke="#0a6b14" strokeWidth=".6" />
          <path d="M46 50h2l3-2M51 50h2" stroke="#064d10" strokeWidth=".7" fill="none" />
          <Label x={45} y={20}>Клапан 1</Label>
          <Label x={31} y={32}>АМС-22-А</Label>
          <Label x={125} y={34}>Реле 3</Label>
          <Label x={160} y={23}>Реле 4</Label>
          <Label x={162} y={48}>Реле 2</Label>
          <Label x={49} y={64}>Реле 1</Label>
          <Label x={36} y={76}>Реле 1</Label>
          <Label x={89} y={76}>Реле 2</Label>
          <Label x={108} y={76}>Реле 3</Label>
          <Label x={160} y={76}>Реле 4</Label>
          <Label x={35} y={92}>DC3232 10200005</Label>
        </Thumb>
      </div>
      <button className="z-10 -mt-2 mb-0.5 flex h-3 w-4 shrink-0 items-center justify-center bg-[#ebecf1]" aria-label="Показать панель">
        <ChevronUp size={11} color="#222" />
      </button>
    </aside>
  );
}

/* ---------- Page ---------- */

export default function App() {
  return (
    <div className="flex h-screen w-full flex-col overflow-hidden bg-[#ebecf1] font-['DejaVu_Sans_Condensed','DejaVu_Sans',sans-serif] text-[6px] leading-[8px] text-[#2f3140]">
      <Ribbon />
      <div className="flex min-h-0 flex-1">
        <Sidebar />
        <div className="flex w-[108px] shrink-0 flex-col gap-[3px] border-l border-[#c5c6ce] py-0.5 pl-[3px]">
          <ViewsPanel />
          <ObjectsPanel />
        </div>
        <Workspace />
        <Thumbnails />
      </div>
      <footer className="flex h-[7px] shrink-0 items-start overflow-hidden bg-linear-to-b from-[#c4c5cd] to-[#d5d6dc] pt-px whitespace-nowrap">
        <span className="-ml-2 w-[89px]">Статус сервера: Подключено</span>
        <span className="h-2 w-2 rounded-full bg-[#2f9e4c]" />
        <span className="ml-auto border-l border-[#a9abb5] pl-1.5">Статус технической поддержки: Активно</span>
        <span className="mr-0.5 ml-1 h-2 w-2 rounded-full bg-[#2f9e4c]" />
      </footer>
    </div>
  );
}
